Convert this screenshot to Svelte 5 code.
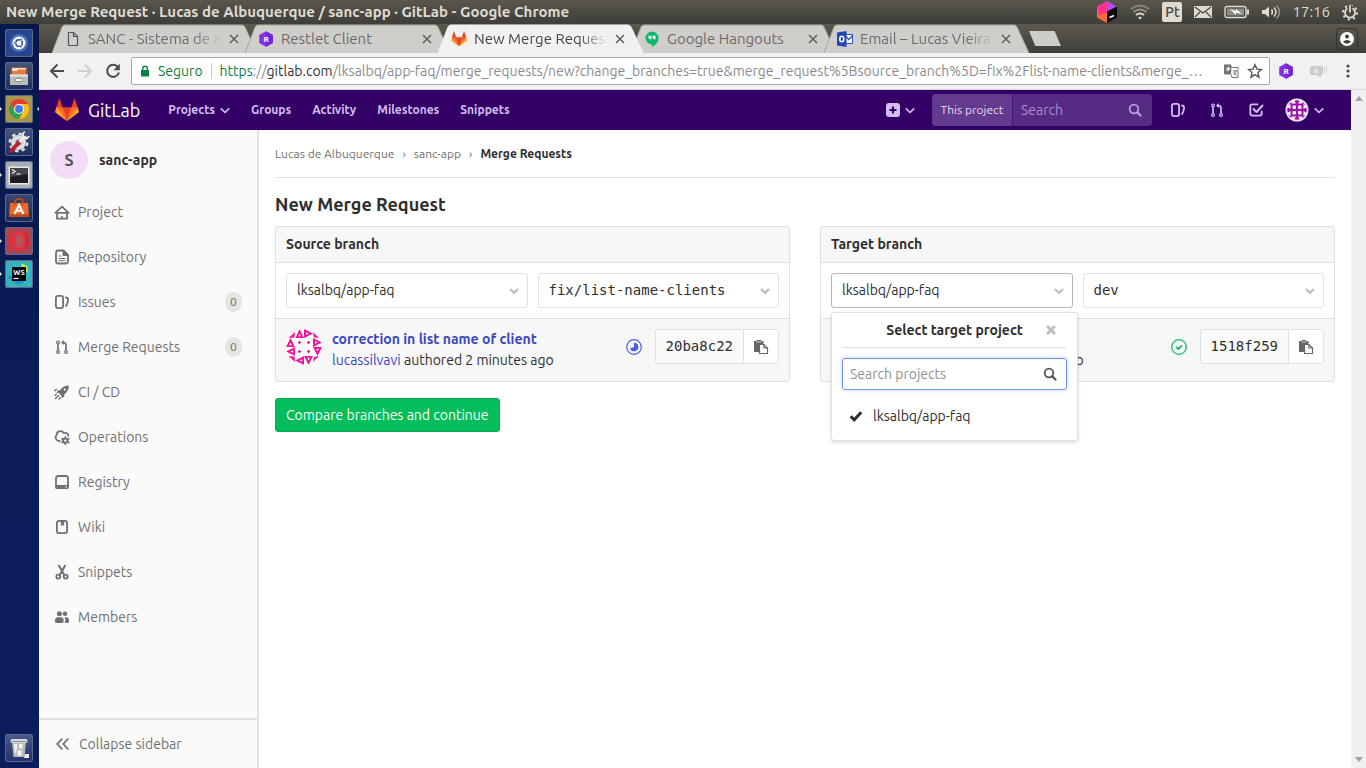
<script>
  const tabs = [
    { title: 'SANC - Sistema de a', icon: 'file', faded: true },
    { title: 'Restlet Client', icon: 'restlet' },
    { title: 'New Merge Request', icon: 'gitlab', active: true, faded: true },
    { title: 'Google Hangouts', icon: 'hangouts' },
    { title: 'Email – Lucas Vieira', icon: 'outlook', faded: true }
  ];

  const launchers = [
    { name: 'dash', label: 'Search your computer' },
    { name: 'files', label: 'Files' },
    { name: 'chrome', label: 'Google Chrome', running: true, focused: true },
    { name: 'settings', label: 'System Settings' },
    { name: 'terminal', label: 'Terminal', running: true },
    { name: 'software', label: 'Software' },
    { name: 'opera', label: 'Opera', running: true },
    { name: 'webstorm', label: 'WebStorm', running: true }
  ];

  const items = [
    { label: 'Project', icon: 'home' },
    { label: 'Repository', icon: 'doc' },
    { label: 'Issues', icon: 'issues', count: 0 },
    { label: 'Merge Requests', icon: 'merge', count: 0 },
    { label: 'CI / CD', icon: 'rocket' },
    { label: 'Operations', icon: 'cloud' },
    { label: 'Registry', icon: 'disk' },
    { label: 'Wiki', icon: 'book' },
    { label: 'Snippets', icon: 'scissors' },
    { label: 'Members', icon: 'users' }
  ];

  let project = $state('');
  let search = $state('');
</script>

{#snippet glyph(name)}
  <svg class="glyph" viewBox="0 0 16 16" width="16" height="16" fill="none" stroke="currentColor" stroke-width="1.8" stroke-linejoin="round" stroke-linecap="round" aria-hidden="true">
    {#if name === 'home'}
      <path d="M1.400 8.800 8 2.700l6.600 6.100z" /><path d="M3 9v5.700h10V9" /><path d="M8 12.800v1.500" />
    {:else if name === 'doc'}
      <path d="M9.500 1.500H4.500a2.500 2.500 0 0 0-2.500 2.500v8a2.500 2.500 0 0 0 2.500 2.500h7A2.500 2.500 0 0 0 14 12V6z" />
      <path d="M9 1.500V6.500h5z" fill="currentColor" stroke-width="1" /><path d="M5 7h2M5 9.500h6M5 11.800h6" stroke-width="1.100" />
    {:else if name === 'issues'}
      <rect x="1.900" y="1.900" width="7.200" height="12.200" rx="2" /><path d="M12 3.500c2 .3 2.300 1.200 2 3-.3 2-.6 4.200-2 5.500" />
    {:else if name === 'merge'}
      <g stroke-width="1.200"><circle cx="4" cy="3.500" r="1.400" /><circle cx="4" cy="13" r="1.400" /><circle cx="12" cy="13" r="1.400" /></g>
      <path d="M4 5.500V11M12 11V6q0-2.500-3-2.500" stroke-width="1.700" /><path d="M9.800 1 7 3.500 9.800 6z" fill="currentColor" stroke="none" />
    {:else if name === 'rocket'}
      <path d="M14.800 1.600c-4 0-6.300 1.400-8.600 4.500L4.100 6.200 2.300 8.800l2.500.2 2.700 2.700.2 2.600 2.600-1.800.1-2.200c3.100-2.300 4.400-4.700 4.400-8.700z" fill="currentColor" stroke="none" />
      <circle cx="10.800" cy="5.600" r="1.100" fill="#fafafa" stroke="none" /><path d="m1.500 14.500 3-3M1.300 11.300l1-1M5.200 15l1-1.200M.9 6.700l1.500-1.500" stroke-width="1.400" />
    {:else if name === 'cloud'}
      <path d="M5.700 12H5A3.600 3.600 0 0 1 2.600 6C2.500 1.800 8 1 9.600 4c2.500-.7 4.600.6 4.800 2.800" />
      <circle cx="11.300" cy="11.600" r="2.200" stroke-width="2" /><path d="M11.300 8v1m0 5.300v1.200M7.900 9.700l1 .6m5 2.700 1 .6M7.900 13.500l1-.6m5-2.700 1-.6" stroke-width="1.600" />
    {:else if name === 'disk'}
      <path d="M2 11V4.200Q2 2 4.200 2h7.600Q14 2 14 4.200V11" /><path d="M1.200 11h13.600v2.500q0 1.500-1.500 1.500H2.700q-1.500 0-1.500-1.500z" fill="currentColor" stroke="none" /><circle cx="12" cy="13" r=".8" fill="#fafafa" stroke="none" />
    {:else if name === 'book'}
      <rect x="2.900" y="1.900" width="10.200" height="12.200" rx="2" /><path d="M7.300 2v4.500l1.200-.8 1.200.8V2z" fill="currentColor" stroke-width=".8" />
    {:else if name === 'scissors'}
      <path d="M5 1.800 10.200 11M11 1.800 5.800 11" stroke-width="2" /><circle cx="4.300" cy="12.600" r="2" /><circle cx="11.700" cy="12.600" r="2" />
    {:else if name === 'users'}
      <g fill="currentColor" stroke="none"><circle cx="5.400" cy="4.800" r="2.500" /><circle cx="11" cy="4.800" r="2.300" /><path d="M1 13.500V11q.3-2.700 3-2.700h2.600q3 0 3 2.700v2.500q-4.300 1.200-8.600 0zM10.600 14q4.400 0 4.400-1v-2.500q-.5-2.200-2.600-2.200h-2q1 1.200 1 3z" /></g>
    {:else if name === 'todo'}
      <path d="M9.500 2.300H4.400Q2.300 2.300 2.300 4.400v7.200q0 2.100 2.100 2.100h7.200q2.100 0 2.100-2.100V9.500" /><path d="m5.500 7 3 3 6-6.500" stroke-width="2" />
    {:else if name === 'search'}
      <circle cx="7" cy="7" r="4.300" /><path d="m10.500 10.500 3 3" stroke-width="2.300" />
    {:else if name === 'chevron'}
      <path d="m3.800 6.300 4.200 4.200 4.200-4.200" stroke-width="1.700" stroke-linecap="butt" />
    {:else if name === 'caret'}
      <path d="m4 6 4 3.800L12 6" stroke-width="2.400" stroke-linecap="butt" stroke-linejoin="miter" />
    {:else if name === 'plus'}
      <rect x="1" y="1" width="14" height="14" rx="3" fill="currentColor" stroke="none" /><path d="M8 4.500v7M4.500 8h7" stroke="#330066" stroke-linecap="butt" stroke-width="2" />
    {:else if name === 'collapse'}
      <path d="M7.300 2.500 2.300 8l5 5.500M13.300 2.500 8.300 8l5 5.500" stroke-linecap="butt" stroke-linejoin="miter" />
    {:else if name === 'copy'}
      <path d="M1 2h2.500V1H8v1h2.500v3H7.500L6 6.500V13H1z" fill="currentColor" stroke="none" /><path d="M3.500 2.900H8" stroke="#fff" stroke-width=".7" />
      <path d="M6.500 5.500H11L14.500 9v5.500h-8z" fill="#fff" stroke-width="1.200" stroke-linejoin="miter" /><path d="M10.800 5.500V9h3.700" stroke-width="1.100" />
    {:else if name === 'close'}
      <path d="m3.500 3.500 9 9m0-9-9 9" stroke-width="3.400" stroke-linecap="butt" />
    {:else if name === 'check'}
      <path d="m2.700 8.300 3.500 3.500 7-7.500" stroke-width="3" stroke-linecap="butt" stroke-linejoin="miter" />
    {:else if name === 'running'}
      <circle cx="8" cy="8" r="7.300" stroke-width="1.200" /><path d="M8 3.700A4.300 4.300 0 1 1 4 9.500L8 8z" fill="currentColor" stroke="none" />
    {:else if name === 'passed'}
      <circle cx="8" cy="8" r="7.300" stroke-width="1.300" /><path d="m5.200 8 2.100 2 3.700-3.700" stroke-width="1.800" stroke-linecap="butt" stroke-linejoin="miter" />
    {/if}
  </svg>
{/snippet}

{#snippet tanuki(size)}
  <svg viewBox="0 0 36 36" width={size} height={size} aria-hidden="true">
    <path fill="#e24329" d="M2 14l9.380 9v-9l-4-12.280c-.205-.632-1.176-.632-1.380 0z" />
    <path fill="#e24329" d="M34 14l-9.380 9v-9l4-12.280c.205-.632 1.176-.632 1.380 0z" />
    <path fill="#e24329" d="M18 34.380 3 14h30z" />
    <path fill="#fc6d26" d="M18 34.380 11.380 14H2l4 11zM18 34.380 24.620 14H34l-4 11z" />
    <path fill="#fca326" d="M2 14 .1 20.160c-.18.565 0 1.200.5 1.560L18 34.380zM34 14l1.900 6.160c.18.565 0 1.200-.5 1.560L18 34.380z" />
  </svg>
{/snippet}

{#snippet hexagon()}
  <svg viewBox="0 0 16 16" width="16" height="16" aria-hidden="true">
    <path d="m8 .3 6.800 3.800v7.800L8 15.700l-6.800-3.800V4.100z" fill="#8432e8" /><path d="m8 .3 6.800 3.800v7.800L8 15.700z" fill="#7127d6" />
    <text x="8" y="11" text-anchor="middle" font-size="8" font-weight="700" fill="#fff">R</text>
  </svg>
{/snippet}

{#snippet favicon(name)}
  {#if name === 'gitlab'}
    {@render tanuki(16)}
  {:else if name === 'restlet'}
    {@render hexagon()}
  {:else}
    <svg viewBox="0 0 16 16" width="16" height="16" aria-hidden="true">
      {#if name === 'file'}
        <path d="M3.500 1.500h5l4 4v9h-9zM8.500 1.500v4h4" fill="none" stroke="#555" stroke-width="1.200" />
      {:else if name === 'hangouts'}
        <path d="M8 .5a6.500 6.500 0 0 0 0 13V16c3-1.500 6.500-4.700 6.500-9A6.500 6.500 0 0 0 8 .5z" fill="#0db76c" />
        <path d="M4.500 4.800h2.900v2.700L6.200 9.200V7.500H4.500zM8.600 4.800h2.900v2.700l-1.200 1.700V7.500H8.600z" fill="#fff" />
      {:else}
        <path d="M8 3.500h7.500v9H8z" fill="#fff" stroke="#2a50c8" /><path d="m9 5.500 2.800 3 3.700-4" fill="none" stroke="#2a50c8" stroke-width="1.300" />
        <path d="M0 1.500 9.500 0v16L0 14.500z" fill="#2546b8" /><ellipse cx="4.800" cy="8" rx="2" ry="2.700" fill="none" stroke="#fff" stroke-width="1.600" />
      {/if}
    </svg>
  {/if}
{/snippet}

{#snippet appicon(name)}
  <svg viewBox="0 0 28 28" width="28" height="28" aria-hidden="true">
    {#if name === 'dash'}
      <circle cx="14" cy="14" r="9" fill="#6f9bdc" opacity=".5" /><circle cx="14" cy="14" r="6.500" fill="#fff" /><circle cx="14" cy="14" r="3.300" fill="none" stroke="#26488f" stroke-width="1.500" />
      <g fill="#26488f" stroke="#fff" stroke-width=".6"><circle cx="9.900" cy="14" r="1.300" /><circle cx="16" cy="10.500" r="1.300" /><circle cx="16" cy="17.500" r="1.300" /></g>
    {:else if name === 'files'}
      <path d="M6 5h16l1 9H5z" fill="#8b5a35" /><path d="M7 6h14v7H7z" fill="#e8e2d8" /><path d="M7 9h5l1-1.500h8V13H7z" fill="#e9763c" />
      <path d="M5 12.500h18V23H5z" fill="#b9b9b5" /><path d="M5 12.500h18v2H5z" fill="#e4e4e0" /><rect x="10.500" y="16.500" width="7" height="3" rx="1" fill="#f5f5f5" stroke="#777" stroke-width=".8" />
    {:else if name === 'chrome'}
      <circle cx="14" cy="14" r="10" fill="#fbc116" /><path d="M14 9h8.700A10 10 0 0 0 5.300 9l4.400 7.500z" fill="#e33b2e" />
      <path d="M5.300 9A10 10 0 0 0 14 24l4.300-7.500h-8.600z" fill="#30a24c" /><circle cx="14" cy="14" r="5" fill="#fff" /><circle cx="14" cy="14" r="4" fill="#3e7de8" />
    {:else if name === 'settings'}
      <circle cx="13.500" cy="14.500" r="7.500" fill="#ddd" /><circle cx="13.500" cy="14.500" r="8.700" fill="none" stroke="#ddd" stroke-width="2.500" stroke-dasharray="3.500 3.300" /><circle cx="13.500" cy="14.500" r="3" fill="#777" />
      <path d="m6 23 8-8.500" stroke="#b8242c" stroke-width="4" stroke-linecap="round" /><path d="m14.500 14 5.500-5.500" stroke="#eee" stroke-width="3" /><path d="M18 6.500q-.5 4 4.500 3.500M20 4q-3 1-2 4M24 8q-1 3-4 2" fill="none" stroke="#eee" stroke-width="1.800" />
    {:else if name === 'terminal'}
      <rect x="3.500" y="5.500" width="21" height="18" rx="1" fill="#e8e8e8" /><rect x="5" y="7" width="18" height="15" fill="#1b1d20" /><path d="M5 7h18v6L5 16z" fill="#44484c" />
      <path d="m7 8.500 3 2-3 2M11.500 13h4" fill="none" stroke="#fff" stroke-width="1.200" />
    {:else if name === 'software'}
      <path d="M5 9h18l1 14H4z" fill="#e9692c" /><path d="M4.200 20h19.600l.2 3H4z" fill="#c64c18" /><path d="M10 11V8q0-3 4-3t4 3v3" fill="none" stroke="#d9480f" stroke-width="1.500" />
      <path d="m9.500 20 4.500-9 4.500 9M11 16.800h6" fill="none" stroke="#fff" stroke-width="2" />
    {:else if name === 'opera'}
      <circle cx="14" cy="14" r="10" fill="#e52f3c" /><ellipse cx="14" cy="14" rx="4.300" ry="7" fill="#b5545c" /><path d="M19 5.500a10 10 0 0 1 0 17q4-8 0-17z" fill="#cf2433" />
    {:else if name === 'webstorm'}
      <path d="m3 9 8-5 12 1 2 10-5 9-13-2z" fill="#20bfe0" /><path d="m16 3 6 3 1 5-5 5z" fill="#c8e34c" /><path d="m3 17 8 7 8-1-8-9z" fill="#1490dc" /><path d="M7 7h14v14H7z" fill="#000" />
      <text x="14" y="14.500" text-anchor="middle" font-size="7.500" font-weight="700" fill="#fff">WS</text><path d="M8.500 18.500h5" stroke="#fff" stroke-width="1.200" />
    {:else}
      <path d="M7 8h14l-1.500 15h-11z" fill="#b8b8b8" /><path d="M9 10h3v5l-2 6zM14 10h4l-1 5-3-1zM13 16l4 1-1 5-4-1z" fill="#f2f2f2" /><rect x="5.500" y="5" width="17" height="4" rx="2" fill="#deded9" /><path d="M7 7.500h14" stroke="#888" /><path d="M20 20h4v4h-5z" fill="#e8e8e8" />
    {/if}
  </svg>
{/snippet}

{#snippet identicon()}
  <svg class="avatar" viewBox="0 0 36 36" width="36" height="36" role="img" aria-label="lucassilvavi">
    <circle cx="18" cy="18" r="18" fill="#fff" />
    <g fill="#ee1699">
      <path d="M9.500 9 13.500 0 18 9zM18 0l9 4.500L18 9zM0 18l4.500-9L9 18zM9 18v9l-9-4.500zM27 9l9 4.500-9 4.500zM27 18h9l-4.500 9zM18 27v9l-9-4.500zM18 27h9l-4.500 9z" />
      <path d="m2.500 9 6-.5L9 3zM27 3l1 5.500 5 .5zM2.500 27l6 .5L9 33zM27 33l1-5 5-1z" />
    </g>
    <path d="m13.700 4.500 1.300 2.700h-2.600zM20 3.200l2.700 1.300L20 5.800zM4.500 13.500l1.300 2.700H3.200zM7.200 21.200v2.600L4.500 22.500zM29 12.200l2.700 1.300-2.700 1.300zM30.200 19.800h2.600l-1.300 2.700zM16.200 30.200v2.600l-2.700-1.300zM21.200 28.800h2.600l-1.300 2.700z" fill="#fff" />
    <path d="m13.500 11.700 1.800 1.800-1.800 1.800-1.800-1.800zm9 0 1.800 1.800-1.800 1.800-1.800-1.800zm-9 9 1.800 1.800-1.800 1.800-1.800-1.800zm9 0 1.800 1.800-1.800 1.800-1.800-1.800z" fill="#ee1699" />
  </svg>
{/snippet}

{#snippet commit(title, author, when, status, sha)}
  <div class="commit">
    {@render identicon()}
    <div class="commit-text">
      <a class="commit-title" href="#commit">{title}</a>
      <p><a href="#author">{author}</a> authored {when}</p>
    </div>
    <span class="status {status}">{@render glyph(status)}</span>
    <div class="sha">
      <code>{sha}</code>
      <button type="button" aria-label="Copy commit SHA">{@render glyph('copy')}</button>
    </div>
  </div>
{/snippet}

<div class="desktop">
  <header class="panel">
    <span class="window-title">New Merge Request · Lucas de Albuquerque / sanc-app · GitLab - Google Chrome</span>
    <div class="indicators">
      <svg viewBox="0 0 22 22" width="22" height="22" aria-hidden="true">
        <path d="m11 0 10 5.500L11 11 1 5.500z" fill="#b84bea" /><path d="M1 5.500 11 11v11L1 16.500z" fill="#ff6b35" /><path d="m1 5.500 10-5v11L3 14z" fill="#ff318c" /><path d="M11 10.500 21 5.500v11L11 22z" fill="#070707" /><path d="m13.500 16.500 4.500-2" stroke="#fff" stroke-width="1.600" />
      </svg>
      <svg viewBox="0 0 22 18" width="22" height="18" fill="none" stroke="#dfdbd2" stroke-width="1.800" aria-hidden="true">
        <path d="M2 6q9-7 18 0" opacity=".4" /><path d="M4.500 9q6.500-5 13 0" opacity=".5" /><path d="M7 12q4-3 8 0" /><path d="m9 14.500 2 2 2-2q-2-1.500-4 0z" fill="#dfdbd2" stroke="none" />
      </svg>
      <span class="layout">Pt</span>
      <svg viewBox="0 0 20 14" width="20" height="14" aria-hidden="true"><path d="M1 1h18v12H1z" fill="#dfdbd2" /><path d="m2 2 8 6 8-6M2 12l5-5m11 5-5-5" fill="none" stroke="#45443f" stroke-width="1.200" /></svg>
      <svg viewBox="0 0 26 14" width="26" height="14" aria-hidden="true"><rect x="1" y="1.500" width="21" height="11" rx="2" fill="none" stroke="#dfdbd2" stroke-width="1.400" /><path d="M3 3.500h17v7H3z" fill="#8e8b84" /><path d="M23 4.500h2v5h-2z" fill="#dfdbd2" /><path d="m6 4 6 2V4l6 5-6-1.500v2.500z" fill="#fff" /></svg>
      <svg viewBox="0 0 20 16" width="20" height="16" fill="none" stroke="#dfdbd2" stroke-width="1.500" aria-hidden="true"><path d="M1 6h3l4-3.500v11L4 10H1z" fill="#dfdbd2" stroke="none" /><path d="M10.500 5.500q2 2.500 0 5M13 3.500q4 4.500 0 9" /><path d="M15.500 1.500q6 6.500 0 13" opacity=".5" /></svg>
      <time>17:16</time>
      <svg viewBox="0 0 18 18" width="18" height="18" fill="none" stroke="#dfdbd2" aria-hidden="true"><circle cx="9" cy="9.500" r="7" stroke-width="2" stroke-dasharray="2.300 3.200" /><path d="M6.500 5.300a5 5 0 1 0 5 0" stroke-width="1.800" /><path d="M9 2v7.500" stroke="#45443f" stroke-width="4" /><path d="M9 2v7.500" stroke-width="1.800" /></svg>
    </div>
  </header>

  <div class="workspace">
    <nav class="launcher" aria-label="Launcher">
      {#each launchers as app}
        <button type="button" class="app {app.name}" class:lit={app.running} class:focused={app.focused} aria-label={app.label}>{@render appicon(app.name)}</button>
      {/each}
      <button type="button" class="app trash" aria-label="Trash">{@render appicon('trash')}</button>
    </nav>

    <div class="browser">
      <div class="tabstrip">
        {#each tabs as tab}
          <div class="tab" class:active={tab.active}>
            <svg class="tab-shape" viewBox="0 0 205 29" preserveAspectRatio="none" aria-hidden="true"><path d="M0 29 10 3q1-2 3-2h177q2 0 3 2l12 26" vector-effect="non-scaling-stroke" /></svg>
            {@render favicon(tab.icon)}
            <span class="tab-title" class:faded={tab.faded}>{tab.title}</span>
            <button type="button" aria-label="Close tab"><svg viewBox="0 0 10 10" width="10" height="10" stroke="currentColor" stroke-width="1.500" aria-hidden="true"><path d="m1 1 8 8m0-8-8 8" /></svg></button>
          </div>
        {/each}
        <button type="button" class="newtab" aria-label="New tab"></button>
        <button type="button" class="person" aria-label="Current user">
          <svg viewBox="0 0 14 14" width="14" height="14" aria-hidden="true"><circle cx="7" cy="7" r="7" fill="#fff" /><circle cx="7" cy="4.500" r="2" fill="#3b3a36" /><path d="M3 9.700q4-3.400 8 0Q7 13.400 3 9.700z" fill="#3b3a36" /></svg>
        </button>
      </div>

      <div class="toolbar">
        <button type="button" aria-label="Back"><svg viewBox="0 0 16 16" width="16" height="16" fill="none" stroke="#4d4d4d" stroke-width="2" aria-hidden="true"><path d="M15 8H2m6.500-6.500L2 8l6.500 6.500" /></svg></button>
        <button type="button" aria-label="Forward"><svg viewBox="0 0 16 16" width="16" height="16" fill="none" stroke="#cfcfcf" stroke-width="2" aria-hidden="true"><path d="M1 8h13M7.500 1.500 14 8l-6.500 6.500" /></svg></button>
        <button type="button" aria-label="Reload"><svg viewBox="0 0 16 16" width="16" height="16" fill="none" stroke="#4d4d4d" stroke-width="2" aria-hidden="true"><path d="M13 4.200A6 6 0 1 0 14 9.500" /><path d="M14.800.8v6.400H8.500z" fill="#4d4d4d" stroke="none" /></svg></button>
        <div class="omnibox">
          <svg viewBox="0 0 10 12" width="10" height="12" aria-hidden="true"><path d="M1 5h8v6.500H1z" fill="#0b8043" /><path d="M2.700 5V3.500q0-2.300 2.300-2.300t2.300 2.300V5" fill="none" stroke="#0b8043" stroke-width="1.400" /></svg>
          <span class="secure">Seguro</span>
          <span class="url"><span class="scheme">https</span>://<b>gitlab.com</b>/lksalbq/app-faq/merge_requests/new?change_branches=true&amp;merge_request%5Bsource_branch%5D=fix%2Flist-name-clients&amp;merge_…</span>
          <button type="button" aria-label="Translate"><svg viewBox="0 0 16 16" width="16" height="16" aria-hidden="true"><path d="M1 1.500h7l3 10H2q-1 0-1-1z" fill="#757575" /><path d="M8.500 4.500H15v10H9l-1-3" fill="#fff" stroke="#757575" /><path d="M7.200 5.500H5v1h1.200Q5.500 8 4.300 7.500 3 6 4.500 4.500q1-.5 1.800.3" fill="none" stroke="#fff" /><path d="M10 8h4M12 7v1m1.500 0q-1 3-3 4M10.500 9l3 3.500" fill="none" stroke="#757575" /></svg></button>
          <button type="button" aria-label="Bookmark"><svg viewBox="0 0 16 16" width="16" height="16" fill="none" stroke="#555" stroke-width="1.400" aria-hidden="true"><path d="m8 1.800 1.900 4.300 4.600.4L11 9.600l1 4.600-4-2.500-4 2.500 1-4.600-3.500-3.100 4.600-.4z" /></svg></button>
        </div>
        <button type="button" class="ext" aria-label="Restlet Client">{@render hexagon()}</button>
        <button type="button" aria-label="Speech"><svg viewBox="0 0 18 14" width="18" height="14" aria-hidden="true"><path d="M2 2h10q2 0 2 2v5q0 2-2 2v3l-4-3H3q-2 0-2-2V4q0-2 2-2z" fill="#ccc" /><text x="7" y="9" text-anchor="middle" font-size="8" font-weight="700" fill="#f2f1f0">a</text><path d="M15.500 3v6M17.500 2v8" stroke="#d5d5d5" /></svg></button>
        <button type="button" aria-label="Menu"><svg viewBox="0 0 4 14" width="4" height="14" fill="#4d4d4d" aria-hidden="true"><circle cx="2" cy="2" r="1.600" /><circle cx="2" cy="7" r="1.600" /><circle cx="2" cy="12" r="1.600" /></svg></button>
      </div>

      <div class="viewport">
        <div class="page">
          <header class="navbar">
            <a class="brand" href="#home">{@render tanuki(24)}<span>GitLab</span></a>
            <nav class="links" aria-label="Global">
              <a href="#projects">Projects {@render glyph('chevron')}</a>
              <a href="#groups">Groups</a>
              <a href="#activity">Activity</a>
              <a href="#milestones">Milestones</a>
              <a href="#snippets">Snippets</a>
            </nav>
            <button type="button" class="new" aria-label="New">{@render glyph('plus')}{@render glyph('chevron')}</button>
            <form class="search">
              <span class="scope">This project</span>
              <input type="text" placeholder="Search" aria-label="Search" bind:value={search} />
              {@render glyph('search')}
            </form>
            <a class="tool" href="#issues" aria-label="Issues">{@render glyph('issues')}</a>
            <a class="tool" href="#merge-requests" aria-label="Merge requests">{@render glyph('merge')}</a>
            <a class="tool" href="#todos" aria-label="Todos">{@render glyph('todo')}</a>
            <button type="button" class="user" aria-label="Account">
              <svg viewBox="0 0 24 24" width="24" height="24" aria-hidden="true">
                <circle cx="12" cy="12" r="11.500" fill="#f4e6f8" /><circle cx="12" cy="12" r="9.800" fill="#a010b0" />
                <g fill="#fff"><rect x="7.500" y="7.500" width="3.500" height="3.500" rx="1" /><rect x="13" y="7.500" width="3.500" height="3.500" rx="1" /><rect x="7.500" y="13" width="3.500" height="3.500" rx="1" /><rect x="13" y="13" width="3.500" height="3.500" rx="1" /><path d="M8.500 1.500 11 5.500H6zM15.500 1.500 18 5.500h-5zM8.500 22.500 11 18.500H6zM15.500 22.500l2.500-4h-5zM1.500 8.500l4-2.500v5zM1.500 15.500l4-2.500v5zM22.500 8.500l-4-2.500v5zM22.500 15.500l-4-2.500v5z" /></g>
              </svg>
              {@render glyph('chevron')}
            </button>
          </header>

          <div class="columns">
            <aside class="sidebar">
              <a class="context" href="#project"><span class="letter">S</span><strong>sanc-app</strong></a>
              <ul>
                {#each items as item}
                  <li><a href="#nav">{@render glyph(item.icon)}<span>{item.label}</span>{#if item.count !== undefined}<span class="badge">{item.count}</span>{/if}</a></li>
                {/each}
              </ul>
              <button type="button" class="collapse">{@render glyph('collapse')}Collapse sidebar</button>
            </aside>

            <main>
              <nav class="breadcrumbs" aria-label="Breadcrumbs">
                <a href="#group">Lucas de Albuquerque</a><span>›</span><a href="#project">sanc-app</a><span>›</span><strong>Merge Requests</strong>
              </nav>
              <h1>New Merge Request</h1>
              <div class="cards">
                <section class="card">
                  <h2>Source branch</h2>
                  <div class="fields">
                    <label class="field"><select aria-label="Source project"><option>lksalbq/app-faq</option></select>{@render glyph('caret')}</label>
                    <label class="field mono"><select aria-label="Source branch"><option>fix/list-name-clients</option></select>{@render glyph('caret')}</label>
                  </div>
                  {@render commit('correction in list name of client', 'lucassilvavi', '2 minutes ago', 'running', '20ba8c22')}
                </section>
                <section class="card">
                  <h2>Target branch</h2>
                  <div class="fields">
                    <div class="field">
                      <button type="button" class="toggle" aria-haspopup="true" aria-expanded="true">lksalbq/app-faq</button>{@render glyph('caret')}
                      <div class="menu">
                        <div class="menu-head"><strong>Select target project</strong><button type="button" aria-label="Close">{@render glyph('close')}</button></div>
                        <div class="filter"><input type="text" placeholder="Search projects" aria-label="Search projects" bind:value={project} />{@render glyph('search')}</div>
                        <button type="button" class="option">{@render glyph('check')}lksalbq/app-faq</button>
                      </div>
                    </div>
                    <label class="field mono"><select aria-label="Target branch"><option>dev</option></select>{@render glyph('caret')}</label>
                  </div>
                  {@render commit('Merge branch dev', 'lucassilvavi', '2 hours ago', 'passed', '1518f259')}
                </section>
              </div>
              <button type="button" class="submit">Compare branches and continue</button>
            </main>
          </div>
        </div>
        <div class="scrollbar" aria-hidden="true"><svg viewBox="0 0 8 5" width="8" height="5"><path d="M0 5 4 0l4 5z" fill="#a3a3a3" /></svg><svg viewBox="0 0 8 5" width="8" height="5"><path d="m0 0 4 5 4-5z" fill="#a3a3a3" /></svg></div>
      </div>
    </div>
  </div>
</div>

<style>
  :global(body) { margin: 0; }
  .desktop, .desktop * { box-sizing: border-box; }
  .desktop { min-height: 100vh; display: flex; flex-direction: column; font-family: Ubuntu, "Noto Sans", "Open Sans", sans-serif; font-size: 14px; line-height: 20px; color: #2e2e2e; }
  button { font: inherit; color: inherit; border: 0; padding: 0; background: none; display: flex; align-items: center; justify-content: center; }
  input, select { font: inherit; color: inherit; }
  a { color: inherit; text-decoration: none; }
  svg { flex: none; display: block; }

  .panel { height: 24px; padding: 0 7px 0 6px; display: flex; align-items: center; justify-content: space-between; background: linear-gradient(#5a574c, #45443e 70%, #3f3e39); color: #dfdbd2; }
  .window-title { font-size: 15px; font-weight: 700; white-space: nowrap; }
  .indicators { display: flex; align-items: center; gap: 11px; }
  .layout { width: 20px; height: 20px; border-radius: 2px; background: #dfdbd2; color: #45443f; text-align: center; font-size: 14px; font-weight: 500; }
  time { font-size: 15px; }

  .workspace { flex: 1; display: flex; }
  .launcher { width: 39px; flex: none; padding: 5px 6px 6px 5px; display: flex; flex-direction: column; align-items: center; gap: 5px; background: linear-gradient(#07184a, #0a1d58 50%, #0c1d5c); }
  .app { position: relative; width: 28px; height: 28px; border-radius: 3px; background: linear-gradient(#46567c, #1b2c5c); box-shadow: inset 0 0 0 1px #5a6b93; }
  .dash { background: #27468f; }
  .chrome { background: #a8954f; }
  .terminal { background: #a9adb3; }
  .software { background: linear-gradient(#3d4869, #1d2a57); }
  .opera { background: #a94653; }
  .webstorm { background: #3cb0b7; }
  .trash { margin-top: auto; background: linear-gradient(#4b5a8c, #23316b); }
  .lit::before, .focused::after { content: ""; position: absolute; top: 12px; left: -5px; border: 2px solid transparent; border-left-color: #e4e6ec; }
  .focused::after { left: auto; right: -6px; border-color: transparent #e4e6ec transparent transparent; }

  .browser { flex: 1; min-width: 0; display: flex; flex-direction: column; }
  .tabstrip { height: 29px; padding: 0 8px 0 13px; display: flex; align-items: stretch; background: linear-gradient(#5c594e, #403f3a); }
  .tab { position: relative; flex: 0 1 205px; min-width: 0; margin-right: -12px; padding: 0 17px 0 13px; display: flex; align-items: center; color: #6b6b6b; font-size: 15px; }
  .tab.active { z-index: 1; color: #444; }
  .tab > * { position: relative; }
  .tab .tab-shape { position: absolute; inset: 0; width: 100%; height: 100%; fill: #d0cecb; stroke: #a5a39e; }
  .tab.active .tab-shape { fill: #f2f1f0; stroke: #f2f1f0; }
  .tab-title { flex: 1; min-width: 0; margin: 0 7px; overflow: hidden; white-space: nowrap; }
  .faded { mask-image: linear-gradient(90deg, #000 80%, transparent); }
  .tab button { width: 12px; color: #5f5f5f; }
  .newtab { align-self: center; width: 32px; height: 15px; margin-left: 12px; background: #cfcdca; clip-path: polygon(0 0, 80% 0, 100% 100%, 20% 100%); }
  .person { align-self: center; margin-left: auto; width: 22px; height: 22px; border: 1px solid #33322e; border-radius: 4px; }

  .toolbar { height: 37px; padding: 0 12px 0 10px; display: flex; align-items: center; gap: 12px; background: #f2f1f0; border-bottom: 1px solid #dad8d6; }
  .toolbar > button { min-width: 16px; }
  .toolbar > button:last-child { margin-left: 7px; min-width: 4px; margin-right: 4px; }
  .toolbar .ext { margin-right: 3px; }
  .omnibox { flex: 1; min-width: 0; height: 28px; margin: 0 -4px 0 -2px; padding: 0 6px 0 8px; display: flex; align-items: center; gap: 8px; border: 1px solid #aaa7a4; border-radius: 2px; background: #fff; }
  .secure { color: #0b8043; padding-right: 8px; border-right: 1px solid #c9c9c9; line-height: 16px; }
  .url { flex: 1; min-width: 0; overflow: hidden; text-overflow: ellipsis; white-space: nowrap; color: #8a8a8a; }
  .url b { font-weight: 400; color: #333; }
  .scheme { color: #0b8043; }

  .viewport { flex: 1; display: flex; }
  .page { flex: 1; min-width: 0; display: flex; flex-direction: column; background: #fff; }
  .scrollbar { width: 15px; flex: none; padding: 6px 0; display: flex; flex-direction: column; justify-content: space-between; align-items: center; background: #f0f0f0; }
  .navbar { height: 40px; padding: 0 24px 0 16px; display: flex; align-items: center; background: #330066; color: #d2bff0; }
  .brand { display: flex; align-items: center; gap: 9px; margin-right: 28px; color: #fff; font-size: 18px; }
  .links { display: flex; gap: 21px; margin-right: auto; font-size: 12px; font-weight: 700; }
  .links a { display: flex; align-items: center; }
  .links .glyph { margin: 0 -3px 0 2px; }
  .new { margin-right: 14px; gap: 1px; }
  .search { display: flex; align-items: center; width: 220px; height: 32px; margin: 0 6px 0 0; padding-right: 9px; border-radius: 4px; background: #552b84; }
  .scope { width: 81px; flex: none; height: 32px; line-height: 32px; text-align: center; font-size: 12px; color: #e8dff5; background: #633b8e; border-right: 1px solid #46157c; border-radius: 4px 0 0 4px; }
  .search input { flex: 1; min-width: 0; padding: 0 8px; border: 0; background: none; outline: none; }
  .search input::placeholder { color: #a98bd0; opacity: 1; }
  .search .glyph { color: #b8a0da; }
  .tool { width: 39px; display: flex; justify-content: center; }
  .user { margin-left: 10px; gap: 2px; }

  .columns { flex: 1; display: flex; }
  .sidebar { width: 220px; flex: none; display: flex; flex-direction: column; background: #fafafa; border-right: 2px solid #e1e1e1; color: #707070; }
  .context { height: 59px; padding: 0 11px; display: flex; align-items: center; gap: 11px; color: #2e2e2e; }
  .letter { width: 38px; height: 38px; border-radius: 50%; background: #f3dcf5; color: #555; text-align: center; line-height: 38px; font-size: 16px; font-weight: 700; }
  ul { list-style: none; margin: 0; padding: 0; }
  li a { height: 45px; padding: 0 15px; display: flex; align-items: center; gap: 8px; }
  .badge { margin-left: auto; min-width: 17px; height: 20px; border-radius: 10px; background: #e5e5e5; text-align: center; font-size: 12px; }
  .collapse { margin-top: auto; height: 50px; padding: 0 16px; justify-content: flex-start; gap: 8px; border-top: 2px solid #e1e1e1; }

  main { flex: 1; min-width: 0; padding: 0 16px; }
  .breadcrumbs { height: 48px; display: flex; align-items: center; gap: 8px; border-bottom: 1px solid #e1e1e1; font-size: 12px; color: #707070; }
  .breadcrumbs strong { color: #2e2e2e; }
  h1 { margin: 14px 0 10px; font-size: 18px; line-height: 24px; }
  .cards { display: grid; grid-template-columns: 1fr 1fr; gap: 30px; }
  .card { min-width: 0; border: 1px solid #dfdfdf; border-radius: 3px; background: #f7f7f7; }
  h2 { margin: 0; padding: 7px 10px 8px; font-size: 14px; line-height: 20px; border-bottom: 1px solid #dfdfdf; }
  .fields { padding: 10px; display: grid; grid-template-columns: 1fr 1fr; gap: 10px; background: #fff; border-bottom: 1px solid #dfdfdf; }
  .field { position: relative; display: block; min-width: 0; }
  .field select, .toggle { width: 100%; height: 35px; padding: 0 30px 2px 10px; border: 1px solid #e1e1e1; border-radius: 3px; background: #fff; appearance: none; }
  .toggle { justify-content: flex-start; border-color: #b7b7b7; }
  .mono select, code { font-family: "DejaVu Sans Mono", monospace; }
  .field > .glyph { position: absolute; right: 6px; top: 10px; color: #bfbfbf; pointer-events: none; }

  .menu { position: absolute; z-index: 2; top: 39px; left: 0; width: 247px; padding: 0 10px 8px; background: #fff; border: 1px solid #dfdfdf; border-radius: 3px; box-shadow: 0 2px 4px rgba(0, 0, 0, .12); }
  .menu-head { height: 35px; display: grid; grid-template-columns: 32px 1fr 32px; align-items: center; border-bottom: 1px solid #dfdfdf; text-align: center; white-space: nowrap; }
  .menu-head strong { grid-column: 2; }
  .menu-head button { color: #bfbfbf; }
  .menu-head .glyph { width: 14px; }
  .filter { height: 32px; margin: 10px 0; padding: 0 8px 0 7px; display: flex; align-items: center; border: 1px solid #6f93ea; border-radius: 3px; box-shadow: 0 0 4px rgba(75, 120, 225, .35); color: #555; }
  .filter input { flex: 1; min-width: 0; padding: 0; border: 0; outline: none; background: none; }
  .filter input::placeholder { color: #919191; opacity: 1; }
  .option { width: 100%; height: 32px; padding: 0 6px; gap: 9px; justify-content: flex-start; }

  .commit { padding: 10px; display: flex; align-items: flex-start; }
  .avatar { border-radius: 50%; margin-right: 10px; }
  .commit-text { flex: 1; min-width: 0; white-space: nowrap; line-height: 21px; }
  .commit-text p { margin: 0; }
  .commit-text a { color: #3b47bd; }
  .commit-title { display: block; font-weight: 700; }
  .status { margin: 10px 13px 0 10px; }
  .running { color: #4a5de5; }
  .passed { color: #1fb866; }
  .sha { display: flex; height: 35px; border: 1px solid #e1e1e1; border-radius: 3px; background: #fafafa; overflow: hidden; }
  code { padding: 0 10px; font-size: 14px; line-height: 33px; }
  .sha button { width: 35px; border-left: 1px solid #e1e1e1; background: #fff; color: #666; }
  .submit { height: 34px; margin-top: 16px; padding: 0 10px; border: 1px solid #12a653; border-radius: 3px; background: #03be5a; color: #fff; white-space: nowrap; }
</style>
